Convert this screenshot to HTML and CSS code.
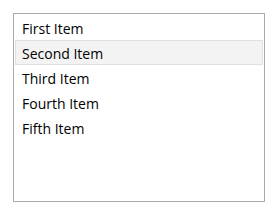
FILE: index.html
```html
<!DOCTYPE html>
<html lang="en">
  <head>
    <meta charset="UTF-8" />
    <title>List Box</title>
    <link rel="stylesheet" href="styles.css">
  </head>
  <body>
    <div class="listbox">
      <div class="item">First Item</div>
      <div class="item hover">Second Item</div>
      <div class="item">Third Item</div>
      <div class="item">Fourth Item</div>
      <div class="item">Fifth Item</div>
    </div>
  </body>
</html>
```

FILE: styles.css
```css
body {
  margin: 0;
  padding: 13px;
  background: white;
  font-family: "Open Sans", "Noto Sans", sans-serif;
}
.listbox {
  width: 248px;
  height: 185px;
  border: 1px solid #ababab;
  padding: 1px;
  box-sizing: content-box;
  background: white;
}
.item {
  height: 22px;
  line-height: 23px;
  padding: 1px 6px 0;
  border: 1px solid transparent;
  font-size: 14px;
  color: #000;
}
.item.hover {
  background: #f3f3f3;
  border-color: #e0e0e0;
}
```
